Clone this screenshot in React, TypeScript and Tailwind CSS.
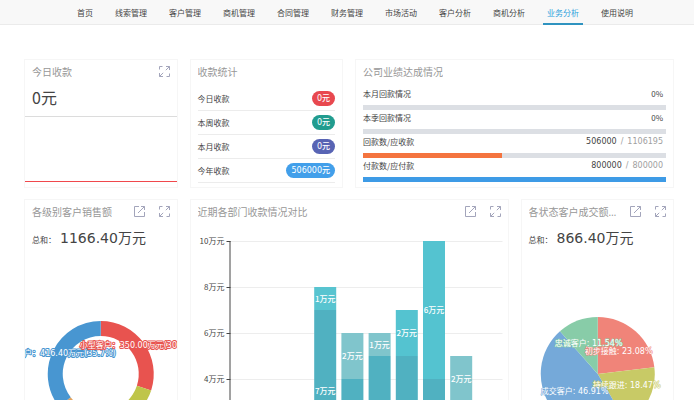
import type { ReactNode } from 'react';
import clsx from 'clsx';

interface Slice {
  from: number;
  to: number;
  color: string;
}

interface ChartLabel {
  text: string;
  x: number;
  y: number;
  outline: string;
  anchor?: 'start' | 'end';
}

const NAV = ['首页', '线索管理', '客户管理', '商机管理', '合同管理', '财务管理', '市场活动', '客户分析', '商机分析', '业务分析', '使用说明'];

const RECEIPTS = [
  { label: '今日收款', value: '0元', badge: 'bg-[#e8484f]' },
  { label: '本周收款', value: '0元', badge: 'bg-[#219c8f]' },
  { label: '本月收款', value: '0元', badge: 'bg-[#5864b4]' },
  { label: '今年收款', value: '506000元', badge: 'bg-[#429fea]' },
];

const GOALS = [
  { label: '本月回款情况', done: '0%', percent: 0, bar: 'bg-[#f4743f]' },
  { label: '本季回款情况', done: '0%', percent: 0, bar: 'bg-[#f4743f]' },
  { label: '回款数/应收款', done: '506000', total: '1106195', percent: 46, bar: 'bg-[#f4743f]' },
  { label: '付款数/应付款', done: '800000', total: '800000', percent: 100, bar: 'bg-[#3e9be6]' },
];

const LEVELS: Slice[] = [
  { from: 0, to: 30, color: '#e8534f' },
  { from: 30, to: 62, color: '#bfc549' },
  { from: 62, to: 64.5, color: '#e2a35e' },
  { from: 64.5, to: 100, color: '#4896d1' },
];

const LEVEL_LABELS: ChartLabel[] = [
  { text: '大型客户：416.40万元(35.7%)', x: 90, y: 106, outline: '#4896d1', anchor: 'end' },
  { text: '小型客户：350.00万元(30%)', x: 54, y: 98, outline: '#e8534f' },
];

const STATES: Slice[] = [
  { from: 0, to: 23.08, color: '#f08479' },
  { from: 23.08, to: 41.55, color: '#c8ca66' },
  { from: 41.55, to: 88.46, color: '#75a9d9' },
  { from: 88.46, to: 100, color: '#88cca8' },
];

const STATE_LABELS: ChartLabel[] = [
  { text: '忠诚客户: 11.54%', x: 32, y: 96, outline: '#88cca8' },
  { text: '初步接触: 23.08%', x: 62, y: 104, outline: '#f08479' },
  { text: '持续跟进: 18.47%', x: 70, y: 138, outline: '#c8ca66' },
  { text: '成交客户: 46.91%', x: 18, y: 144, outline: '#75a9d9' },
];

const BARS = [
  { slot: 3, base: 7, top: 1, color: '#58c4d0' },
  { slot: 4, base: 4, top: 2, color: '#80c5cc' },
  { slot: 5, base: 5, top: 1, color: '#80c5cc' },
  { slot: 6, base: 5, top: 2, color: '#54c3d0' },
  { slot: 7, base: 4, top: 6, color: '#54c3d0' },
  { slot: 8, base: 3, top: 2, color: '#80c5cc' },
];

function ExpandIcon() {
  return (
    <svg viewBox="0 0 11 11" className="size-[11px]" fill="none" stroke="currentColor">
      <path d="M.5 3.5v-3h3M7 .5h3.5V4M10.5 7.5v3h-3M4 10.5H.5V7M10.5.5 6.8 4.2M.5 10.5l3.7-3.7" />
    </svg>
  );
}

function OpenIcon() {
  return (
    <svg viewBox="0 0 11 11" className="size-[11px]" fill="none" stroke="currentColor">
      <path d="M5 .5H.5v10h10V6M7 .5h3.5V4M10.5.5 4 7" />
    </svg>
  );
}

interface CardProps {
  title: string;
  wide?: boolean;
  open?: boolean;
  expand?: boolean;
  children: ReactNode;
}

function Card({ title, wide, open, expand, children }: CardProps) {
  return (
    <section className={clsx('min-w-0 border border-[#f6f6f6] bg-white', wide && 'col-span-2')}>
      <header className="flex h-[26px] items-center justify-between gap-1 px-[7px] pb-[3px]">
        <h2 className="truncate pt-[2px] font-['Open_Sans','Noto_Sans_CJK_SC',sans-serif] text-[10px] text-[#979797]">{title}</h2>
        <div className="flex shrink-0 gap-[14px] text-[#a3a5bb]">
          {open && <button type="button" aria-label="打开" className="cursor-pointer"><OpenIcon /></button>}
          {expand && <button type="button" aria-label="全屏" className="cursor-pointer"><ExpandIcon /></button>}
        </div>
      </header>
      {children}
    </section>
  );
}

function Total({ value }: { value: string }) {
  return (
    <p className="flex h-6 items-center gap-1 px-[7px] text-[#444]">
      <span className="pt-1">总和：</span>
      <span className="font-['DejaVu_Sans','Noto_Sans_CJK_SC',sans-serif] text-[14px]">{value}</span>
    </p>
  );
}

function point(cx: number, cy: number, r: number, percent: number) {
  const a = (percent / 100) * Math.PI * 2;
  return `${cx + r * Math.sin(a)} ${cy - r * Math.cos(a)}`;
}

function slicePath(s: Slice, cx: number, cy: number, r: number, hole: number) {
  const large = s.to - s.from > 50 ? 1 : 0;
  return [
    `M${point(cx, cy, r, s.from)}`,
    `A${r} ${r} 0 ${large} 1 ${point(cx, cy, r, s.to)}`,
    `L${point(cx, cy, hole, s.to)}`,
    hole > 0 ? `A${hole} ${hole} 0 ${large} 0 ${point(cx, cy, hole, s.from)}` : '',
    'Z',
  ].join(' ');
}

interface PieProps {
  slices: Slice[];
  labels: ChartLabel[];
  cx: number;
  r: number;
  hole?: number;
  outline: number;
}

function Pie({ slices, labels, cx, r, hole = 0, outline }: PieProps) {
  return (
    <svg viewBox="0 0 150 190"
      className="h-[190px] w-full overflow-hidden font-['DejaVu_Sans','Noto_Sans_CJK_SC',sans-serif]">
      {slices.map(s => (
        <path key={s.from} d={slicePath(s, cx, 124, r, hole)} fill={s.color} />
      ))}
      {labels.map(l => (
        <text key={l.text} x={l.x} y={l.y} fontSize="8" fill="#fff" stroke={l.outline} strokeWidth={outline}
          strokeLinejoin="round" paintOrder="stroke" textAnchor={l.anchor ?? 'start'}>
          {l.text}
        </text>
      ))}
    </svg>
  );
}

const UNIT = 23;
const ZERO = 245;
const SLOT = 27.2;

function BarChart() {
  return (
    <svg viewBox="0 0 316 270" className="h-[270px] w-full" fontSize="8">
      {[10, 8, 6, 4, 2, 0].map(n => {
        const y = ZERO - n * UNIT + 0.5;
        return (
          <g key={n}>
            <path d={`M39 ${y}H311`} stroke="#ededed" />
            <path d={`M35 ${y}h4`} stroke="#444" />
            <text x="33" y={y + 2.5} fill="#444" textAnchor="end">{n}万元</text>
          </g>
        );
      })}
      <path d={`M38.5 15V${ZERO}`} stroke="#444" />
      {BARS.map(b => {
        const x = 39 + b.slot * SLOT + 2.1;
        const split = ZERO - b.base * UNIT;
        return (
          <g key={b.slot} fill="#fff" textAnchor="middle" fontWeight="500">
            <rect x={x} y={split} width="22" height={b.base * UNIT} fill="#50b1c1" />
            <rect x={x} y={split - b.top * UNIT} width="22" height={b.top * UNIT} fill={b.color} />
            <text x={x + 11} y={split - (b.top * UNIT) / 2 + 3}>{b.top}万元</text>
            <text x={x + 11} y={split + (b.base * UNIT) / 2 + 3}>{b.base}万元</text>
          </g>
        );
      })}
    </svg>
  );
}

export default function App() {
  return (
    <div className="h-screen overflow-hidden bg-white font-['Noto_Sans_CJK_SC',sans-serif] text-[8px] text-[#444]">
      <nav className="flex h-[25px] gap-[14px] border-b border-[#ebebeb] bg-[#f8f8f8] pl-[73px] whitespace-nowrap">
        {NAV.map(item => (
          <a key={item} href="#"
            className={clsx('flex h-[25px] items-center border-b-2 px-1 pt-[3px]',
              item === '业务分析' ? 'border-[#2f93c0] text-[#2b9fdc]' : 'border-transparent')}>
            {item}
          </a>
        ))}
      </nav>

      <main className="grid grid-cols-4 gap-x-3 gap-y-[11px] pt-[34px] pr-5 pl-6">
        <Card title="今日收款" expand>
          <p className="flex h-[30px] items-center px-[7px] pb-[8px] text-[16px]">0元</p>
          <div className="h-px bg-[#dcdcdc]" />
          <div className="mt-16 h-px bg-[#f0484c]" />
        </Card>

        <Card title="收款统计">
          <ul className="mt-px px-[7px] pb-[4px]">
            {RECEIPTS.map(r => (
              <li key={r.label} className="flex h-6 items-center justify-between border-b border-[#ececec]">
                <span>{r.label}</span>
                <span className={clsx("flex h-[15px] items-center rounded-full px-[5px] font-['DejaVu_Sans','Noto_Sans_CJK_SC',sans-serif] font-medium text-white", r.badge)}>
                  {r.value}
                </span>
              </li>
            ))}
          </ul>
        </Card>

        <Card title="公司业绩达成情况" wide>
          <div className="px-[7px]">
            {GOALS.map(g => (
              <div key={g.label}>
                <div className="flex h-4 items-center justify-between pr-[3px]">
                  <span>{g.label}</span>
                  {g.total ? (
                    <span className="flex gap-1 font-['DejaVu_Sans',sans-serif]">
                      <span>{g.done}</span>
                      <span className="text-[#a0a0a0]">/</span>
                      <span className="text-[#a0a0a0]">{g.total}</span>
                    </span>
                  ) : (
                    <span>{g.done}</span>
                  )}
                </div>
                <div className="mt-[3px] h-[5px] bg-[#dcdfe4]">
                  <div className={clsx('h-full', g.bar)} style={{ width: `${g.percent}%` }} />
                </div>
              </div>
            ))}
          </div>
        </Card>

        <Card title="各级别客户销售额" open expand>
          <Total value="1166.40万元" />
          <Pie slices={LEVELS} labels={LEVEL_LABELS} cx={75} r={53} hole={38} outline={2} />
        </Card>

        <Card title="近期各部门收款情况对比" wide open expand>
          <BarChart />
        </Card>

        <Card title="各状态客户成交额统计" open expand>
          <Total value="866.40万元" />
          <Pie slices={STATES} labels={STATE_LABELS} cx={75} r={57} outline={1} />
        </Card>
      </main>
    </div>
  );
}
